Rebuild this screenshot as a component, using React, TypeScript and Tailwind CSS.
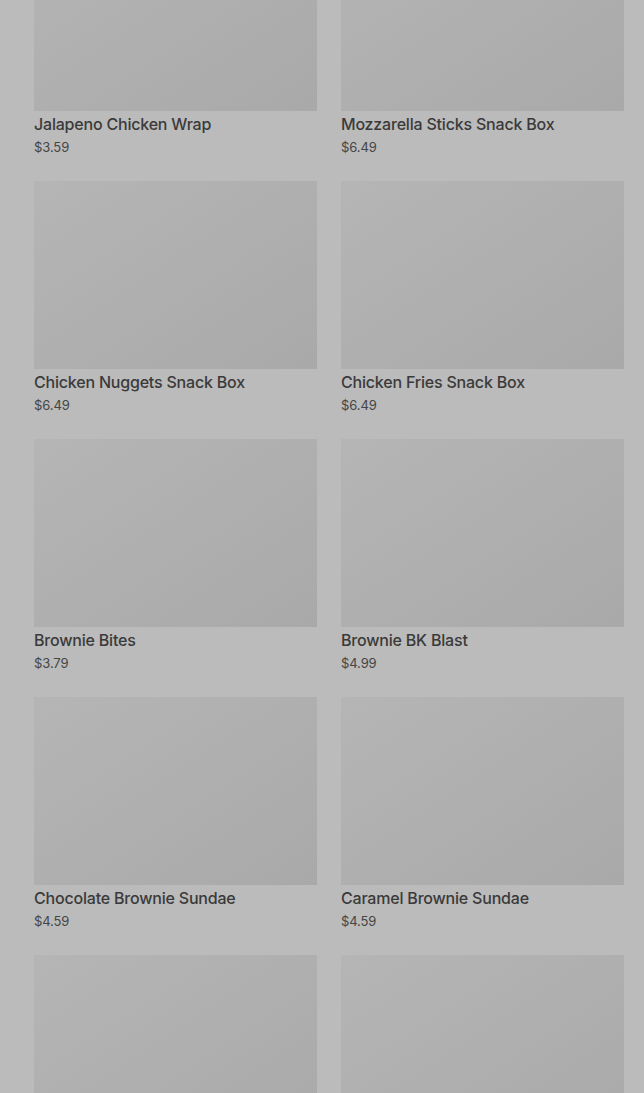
const items = [
  { name: "Jalapeno Chicken Wrap", price: "$3.59" },
  { name: "Mozzarella Sticks Snack Box", price: "$6.49" },
  { name: "Chicken Nuggets Snack Box", price: "$6.49" },
  { name: "Chicken Fries Snack Box", price: "$6.49" },
  { name: "Brownie Bites", price: "$3.79" },
  { name: "Brownie BK Blast", price: "$4.99" },
  { name: "Chocolate Brownie Sundae", price: "$4.59" },
  { name: "Caramel Brownie Sundae", price: "$4.59" },
];

const ItemImage = () => (
  <div className="h-[188px] w-full bg-gradient-to-br from-[#b5b5b5] to-[#a9a9a9]" />
);

const ItemCard = ({ name, price }: { name: string; price: string }) => {
  return (
    <div className="flex flex-col">
      <ItemImage />
      <p className="mt-[3px] text-[16px] leading-[20px] font-medium tracking-[-0.2px] text-[#3a3a3a]">{name}</p>
      <p className="mt-[4px] text-[13px] leading-[18px] tracking-[-0.1px] text-[#454545]">{price}</p>
    </div>
  );
};

export default function App() {
  return (
    <div
      className="h-[1093px] w-full overflow-hidden bg-[#bbbbbb]"
      style={{ fontFamily: "Inter, 'Noto Sans', sans-serif" }}
    >
      {/* list is scrolled: first row is partly above the fold */}
      <div className="-mt-[77px] grid grid-cols-2 gap-x-[24px] gap-y-[25px] pl-[34px] pr-[20px]">
        {items.map((item) => (
          <ItemCard key={item.name} name={item.name} price={item.price} />
        ))}
        {/* next row, only the images reach into view */}
        <ItemImage />
        <ItemImage />
      </div>
    </div>
  );
}
